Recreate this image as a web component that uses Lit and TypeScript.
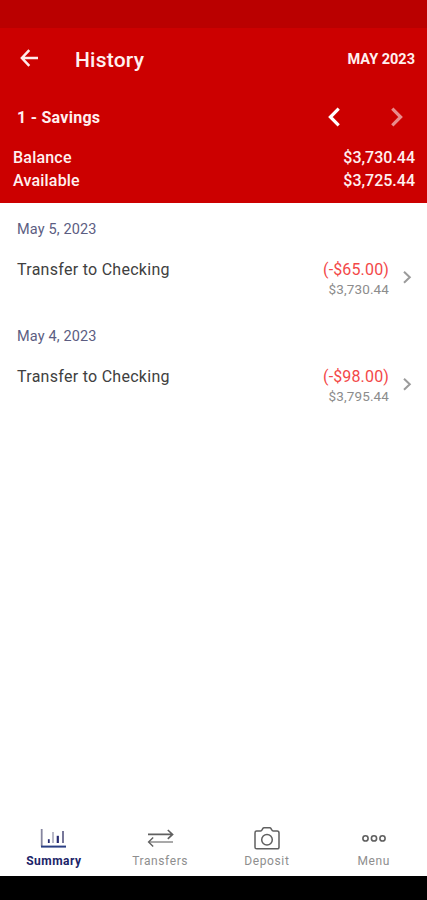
import { LitElement, html, css, svg } from "lit";
import { customElement, property } from "lit/decorators.js";
import { classMap } from "lit/directives/class-map.js";

interface Entry { date: string; title: string; amount: string; balance: string; }

const entries: Entry[] = [
  { date: "May 5, 2023", title: "Transfer to Checking", amount: "(-$65.00)", balance: "$3,730.44" },
  { date: "May 4, 2023", title: "Transfer to Checking", amount: "(-$98.00)", balance: "$3,795.44" },
];

const icons = {
  summary: svg`<path d="M1.7 3V20.4" stroke="#85859f" stroke-width="1.8"/><path d="M1 20.6H26" stroke="#2b3f84" stroke-width="2"/><path d="M8.8 13.2V17" stroke-width="1.8"/><path d="M13 6V17" stroke="#b9b9c8" stroke-width="2"/><path d="M17.8 9.8V17" stroke-width="2.2"/><path d="M23 5V17" stroke="#777799" stroke-width="2"/>`,
  transfers: svg`<path d="M1 8.4H25.5M20.8 4L25.6 8.4L20.8 12.8" stroke-width="1.6"/><path d="M26 16H2" stroke="#8c8c8c" stroke-width="1.5"/><path d="M6.2 11.6L1.6 16L6.2 20.4" stroke-width="1.4"/>`,
  deposit: svg`<path d="M3.6 5H7.6Q8.6 5 9.1 3.8L9.6 2.8Q10.1 1.8 11.2 1.8H16.6Q17.7 1.8 18.2 2.8L18.7 3.8Q19.2 5 20.2 5H24.1Q26 5 26 6.9V21.2Q26 22.8 24.1 22.8H3.8Q2 22.8 2 21.2V6.9Q2 5 3.6 5Z" stroke-width="1.5"/><circle cx="14" cy="13.7" r="5.3" stroke-width="1.5"/>`,
  menu: svg`<circle cx="5.5" cy="12.4" r="2.6" stroke-width="1.6"/><circle cx="14" cy="12.4" r="2.6" stroke-width="1.6"/><circle cx="22.5" cy="12.4" r="2.6" stroke-width="1.6"/>`,
};

@customElement("nav-tab")
class NavTab extends LitElement {
  @property() label = "";
  @property() icon: keyof typeof icons = "summary";
  @property({ type: Boolean }) active = false;
  static styles = css`
    :host { flex: 1; display: block; }
    .tab { display: flex; flex-direction: column; align-items: center; color: #8e8e8e; padding-top: 8px; }
    svg { width: 27px; height: 24px; fill: none; stroke: #606060; display: block; overflow: visible; }
    .label { font-size: 12px; line-height: 16px; margin-top: 3px; letter-spacing: 0.6px; }
    .active { color: #1c2468; }
    .active .label { font-weight: 700; letter-spacing: 0.5px; padding-left: 1px; }
    .active svg { stroke: #262a70; }
  `;
  render() {
    return html`<div class=${classMap({ tab: true, active: this.active })}>
      <svg viewBox="0 0 27 24">${icons[this.icon]}</svg>
      <span class="label">${this.label}</span>
    </div>`;
  }
}

@customElement("history-entry")
class HistoryEntry extends LitElement {
  @property({ attribute: false }) entry!: Entry;
  static styles = css`
    :host { display: block; height: 107px; }
    .date { height: 51px; line-height: 53px; padding-left: 17px; font-size: 14.5px; color: #5c5d82; letter-spacing: 0.13px; }
    .row { display: flex; height: 50px; padding: 4px 15px 0 17px; box-sizing: border-box; }
    .title { flex: 1; font-size: 16px; line-height: 24px; color: #404040; letter-spacing: 0.28px; }
    .amounts { display: flex; flex-direction: column; align-items: flex-end; margin-right: 14px; }
    .amount { font-size: 16px; line-height: 24px; color: #f34848; letter-spacing: 0.15px; }
    .balance { font-size: 13.5px; line-height: 15px; color: #8c8c8c; letter-spacing: 0.12px; }
    svg { width: 9px; height: 14px; margin-top: 12px; fill: none; stroke: #9b9b9b; stroke-width: 2; }
  `;
  render() {
    const e = this.entry;
    return html`<div class="date">${e.date}</div>
      <div class="row">
        <span class="title">${e.title}</span>
        <div class="amounts"><span class="amount">${e.amount}</span><span class="balance">${e.balance}</span></div>
        <svg viewBox="0 0 9 14"><path d="M1 1.7L6.8 7.2L1 12.7"/></svg>
      </div>`;
  }
}

@customElement("app-root")
class AppRoot extends LitElement {
  static styles = css`
    :host { display: flex; flex-direction: column; height: 900px; background: #fff; font-family: Roboto, sans-serif; overflow: hidden; }
    .status { height: 28px; background: #ba0000; flex: none; }
    header { height: 175px; background: #cc0000; color: #fff0f0; flex: none; font-weight: 500; }
    .bar { display: flex; align-items: center; height: 62px; padding: 0 12px 0 20px; }
    .back { width: 18px; height: 18px; fill: none; stroke: #ffecec; stroke-width: 2.5; margin-bottom: 2px; }
    .heading { flex: 1; margin: 0 0 0 37px; padding-top: 1px; font-size: 21px; font-weight: 500; letter-spacing: 0.22px; }
    .month { font-size: 14.5px; font-weight: 700; }
    .account { display: flex; align-items: center; height: 54px; padding: 0 23px 0 17px; }
    .name { flex: 1; font-size: 16px; font-weight: 700; letter-spacing: 0.26px; }
    .step { width: 14px; height: 20px; fill: none; stroke: #fff; stroke-width: 3.2; margin-bottom: 1px; }
    .next { margin-left: 49px; opacity: .55; }
    .line { display: flex; justify-content: space-between; height: 22.7px; line-height: 23px; padding: 0 12px 0 13px; font-size: 16px; }
    .line span:first-child { letter-spacing: 0.2px; }
    .totals { padding-top: 2.4px; }
    main { flex: 1; }
    nav { display: flex; height: 58px; flex: none; }
    .system { height: 24px; background: #000; flex: none; }
  `;
  render() {
    return html`
      <div class="status"></div>
      <header>
        <div class="bar">
          <svg class="back" viewBox="0 0 18 18"><path d="M18 9H2M9.3 1.2L1.9 9L9.3 16.8"/></svg>
          <h1 class="heading">History</h1><span class="month">MAY 2023</span>
        </div>
        <div class="account">
          <span class="name">1 - Savings</span>
          <svg class="step" viewBox="0 0 14 20"><path d="M11.7 1.7L3.4 10L11.7 18.3"/></svg>
          <svg class="step next" viewBox="0 0 14 20"><path d="M2.3 1.7L10.6 10L2.3 18.3"/></svg>
        </div>
        <div class="totals">
          <div class="line"><span>Balance</span><span>$3,730.44</span></div>
          <div class="line"><span>Available</span><span>$3,725.44</span></div>
        </div>
      </header>
      <main>${entries.map((e) => html`<history-entry .entry=${e}></history-entry>`)}</main>
      <nav>
        <nav-tab icon="summary" label="Summary" active></nav-tab>
        <nav-tab icon="transfers" label="Transfers"></nav-tab>
        <nav-tab icon="deposit" label="Deposit"></nav-tab>
        <nav-tab icon="menu" label="Menu"></nav-tab>
      </nav>
      <div class="system"></div>`;
  }
}
